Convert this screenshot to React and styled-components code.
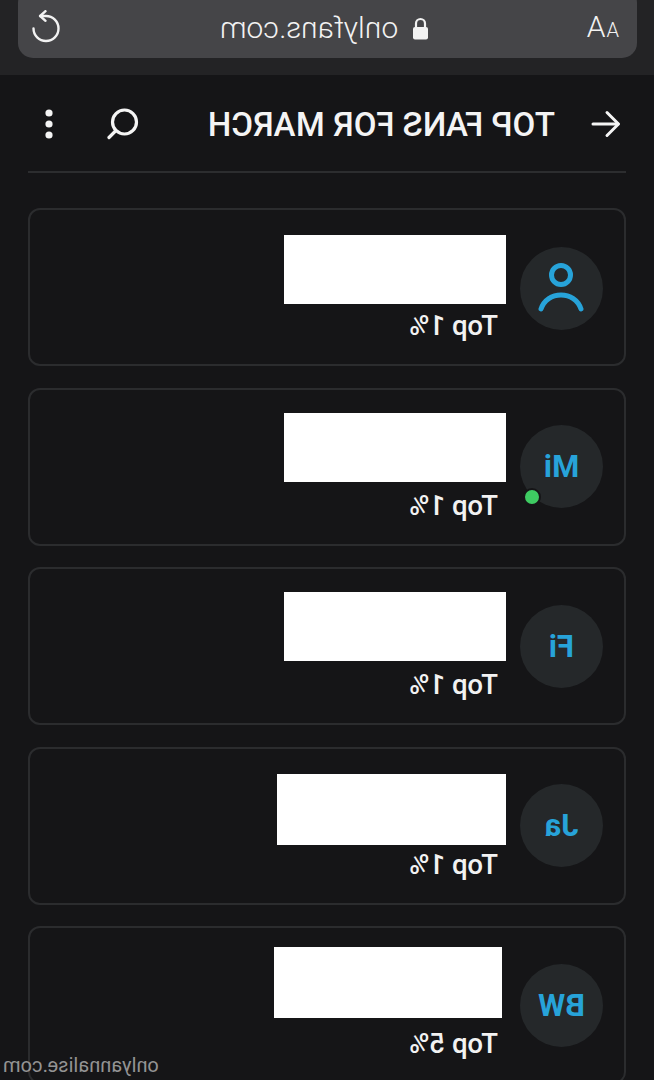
import React from "react";
import styled, { createGlobalStyle } from "styled-components";

const GlobalStyle = createGlobalStyle`
  html, body {
    margin: 0;
    padding: 0;
    background: #151517;
  }
  body {
    font-family: Roboto, "Liberation Sans", sans-serif;
    overflow: hidden;
  }
`;

/* the whole screenshot is a mirror image, so the page is built normally and flipped once */
const Page = styled.div`
  position: relative;
  width: 654px;
  height: 1080px;
  overflow: hidden;
  background: #151517;
  transform: scaleX(-1);
`;

const BrowserBar = styled.div`
  height: 75px;
  box-sizing: border-box;
  padding: 0 18px 17px 17px;
  background: #232325;
  display: flex;
  flex-direction: column;
  justify-content: flex-end;
`;

const AddressBar = styled.div`
  height: 70px;
  margin-top: -12px;
  background: #454548;
  border-radius: 15px;
  display: grid;
  grid-template-columns: 70px 1fr 70px;
  align-items: center;
  color: #f2f2f2;
`;

const TextSize = styled.div`
  padding: 10px 0 0 18px;
  font-size: 30px;
  line-height: 30px;
  font-weight: 300;
  letter-spacing: 1px;
  white-space: nowrap;
  & span {
    font-size: 20px;
  }
`;

const Url = styled.div`
  display: flex;
  align-items: center;
  justify-content: center;
  gap: 14px;
  padding: 10px 0 0 6px;
  font-size: 30px;
  line-height: 30px;
  font-weight: 300;
`;

const ReloadWrap = styled.div`
  display: flex;
  justify-content: flex-end;
  padding: 8px 13px 0 0;
`;

const Main = styled.div`
  padding: 0 28px;
`;

const Header = styled.div`
  height: 94px;
  padding-top: 2px;
  display: flex;
  align-items: center;
  border-bottom: 2px solid #2c2d2f;
`;

const BackSlot = styled.div`
  display: flex;
  margin-left: 5px;
`;

const Title = styled.h1`
  flex: 1;
  margin: 2px 0 0 36px;
  font-size: 33px;
  line-height: 36px;
  font-weight: 500;
  color: #f4f4f4;
  white-space: nowrap;
`;

const IconSlot = styled.div`
  display: flex;
  align-items: center;
  justify-content: center;
  margin-right: ${(p) => p.$gap}px;
`;

const CardList = styled.div`
  display: flex;
  flex-direction: column;
  gap: 21.5px;
  padding-top: 35px;
`;

const Card = styled.div`
  height: 158px;
  flex: none;
  box-sizing: border-box;
  border: 2px solid #2b2c2e;
  border-radius: 12px;
  padding: 0 0 0 21px;
  display: flex;
  align-items: flex-start;
  gap: ${(p) => p.$gap}px;
`;

const Avatar = styled.div`
  position: relative;
  flex: none;
  align-self: center;
  width: 83px;
  height: 83px;
  margin-top: ${(p) => p.$nudge}px;
  border-radius: 50%;
  background: #25282a;
  color: #27a3d9;
  font-size: 31px;
  font-weight: 700;
  display: flex;
  align-items: center;
  justify-content: center;
`;

const OnlineDot = styled.span`
  position: absolute;
  right: 3px;
  bottom: 2px;
  width: 14px;
  height: 14px;
  border: 2px solid #151517;
  border-radius: 50%;
  background: #3ecb62;
`;

const Info = styled.div`
  display: flex;
  flex-direction: column;
  align-items: flex-start;
  padding-top: ${(p) => p.$top}px;
`;

const Redaction = styled.div`
  height: ${(p) => p.$h}px;
  width: ${(p) => p.$w}px;
  background: #ffffff;
`;

const Rank = styled.div`
  margin: ${(p) => p.$drop}px 0 0 ${(p) => p.$indent}px;
  font-size: 27.5px;
  line-height: 30px;
  font-weight: 500;
  color: #f2f2f2;
`;

const Watermark = styled.div`
  position: absolute;
  right: 0;
  bottom: 3px;
  padding-right: 3px;
  font-size: 20px;
  line-height: 24px;
  color: #a9a9a9;
  opacity: 0.85;
`;

const fans = [
  { id: 1, initials: null, rank: "Top 1%", w: 222, h: 69, gap: 14, indent: 8, top: 25, drop: 7, nudge: 2 },
  { id: 2, initials: "Mi", rank: "Top 1%", online: true, w: 222, h: 69, gap: 14, indent: 8, top: 23.5, drop: 9, nudge: 0 },
  { id: 3, initials: "Fi", rank: "Top 1%", w: 222, h: 69, gap: 14, indent: 8, top: 23, drop: 9, nudge: 0 },
  { id: 4, initials: "Ja", rank: "Top 1%", w: 229, h: 71, gap: 14, indent: 8, top: 25.5, drop: 5, nudge: 0 },
  { id: 5, initials: "BW", rank: "Top 5%", w: 228, h: 71, gap: 18, indent: 4, top: 19, drop: 11, nudge: 0 },
];

function ReloadIcon() {
  return (
    <svg width="30" height="34" viewBox="0 0 30 34" fill="none" stroke="#f2f2f2" strokeWidth="2.4" strokeLinecap="round" strokeLinejoin="round">
      <path d="M21 6H15A12.5 12.5 0 1 0 27.5 18.5" />
      <path d="M15.5 1.2L20.8 6l-5.3 4.8" />
    </svg>
  );
}

function LockIcon() {
  return (
    <svg width="17" height="23" viewBox="0 0 17 23">
      <path d="M4 10V6.5a4.5 4.5 0 0 1 9 0V10" fill="none" stroke="#f2f2f2" strokeWidth="2.2" />
      <rect x="1" y="10" width="15" height="12.5" rx="2" fill="#f2f2f2" />
    </svg>
  );
}

function BackIcon() {
  return (
    <svg width="30" height="28" viewBox="0 0 30 28" fill="none" stroke="#f4f4f4" strokeWidth="3" strokeLinecap="round" strokeLinejoin="round">
      <path d="M28 14H3" />
      <path d="M14 2.5L2.5 14 14 25.5" />
    </svg>
  );
}

function SearchIcon() {
  return (
    <svg width="32" height="32" viewBox="0 0 32 32" fill="none" stroke="#f4f4f4" strokeWidth="3.2" strokeLinecap="round">
      <circle cx="14.5" cy="14" r="12" />
      <path d="M24 23.5l6 6" />
    </svg>
  );
}

function DotsIcon() {
  return (
    <svg width="8" height="30" viewBox="0 0 8 30" fill="#f4f4f4">
      <circle cx="4" cy="4" r="3.6" />
      <circle cx="4" cy="15" r="3.6" />
      <circle cx="4" cy="26" r="3.6" />
    </svg>
  );
}

function UserIcon() {
  return (
    <svg width="46" height="50" viewBox="0 0 46 50" fill="none" stroke="#27a3d9" strokeWidth="5" strokeLinecap="round">
      <circle cx="23" cy="12" r="9.5" />
      <path d="M3 46c3-9 11-14 20-14s17 5 20 14" />
    </svg>
  );
}

export default function App() {
  return (
    <>
      <GlobalStyle />
      <Page>
        <BrowserBar>
          <AddressBar>
            <TextSize>
              <span>A</span>A
            </TextSize>
            <Url>
              <LockIcon />
              onlyfans.com
            </Url>
            <ReloadWrap>
              <ReloadIcon />
            </ReloadWrap>
          </AddressBar>
        </BrowserBar>
        <Main>
          <Header>
            <BackSlot>
              <BackIcon />
            </BackSlot>
            <Title>TOP FANS FOR MARCH</Title>
            <IconSlot $gap={54}>
              <SearchIcon />
            </IconSlot>
            <IconSlot $gap={17}>
              <DotsIcon />
            </IconSlot>
          </Header>
          <CardList>
            {fans.map((fan) => (
              <Card key={fan.id} $gap={fan.gap}>
                <Avatar $nudge={fan.nudge}>
                  {fan.initials || <UserIcon />}
                  {fan.online && <OnlineDot />}
                </Avatar>
                <Info $top={fan.top}>
                  <Redaction $w={fan.w} $h={fan.h} />
                  <Rank $drop={fan.drop} $indent={fan.indent}>{fan.rank}</Rank>
                </Info>
              </Card>
            ))}
          </CardList>
        </Main>
        <Watermark>onlyannalise.com</Watermark>
      </Page>
    </>
  );
}
